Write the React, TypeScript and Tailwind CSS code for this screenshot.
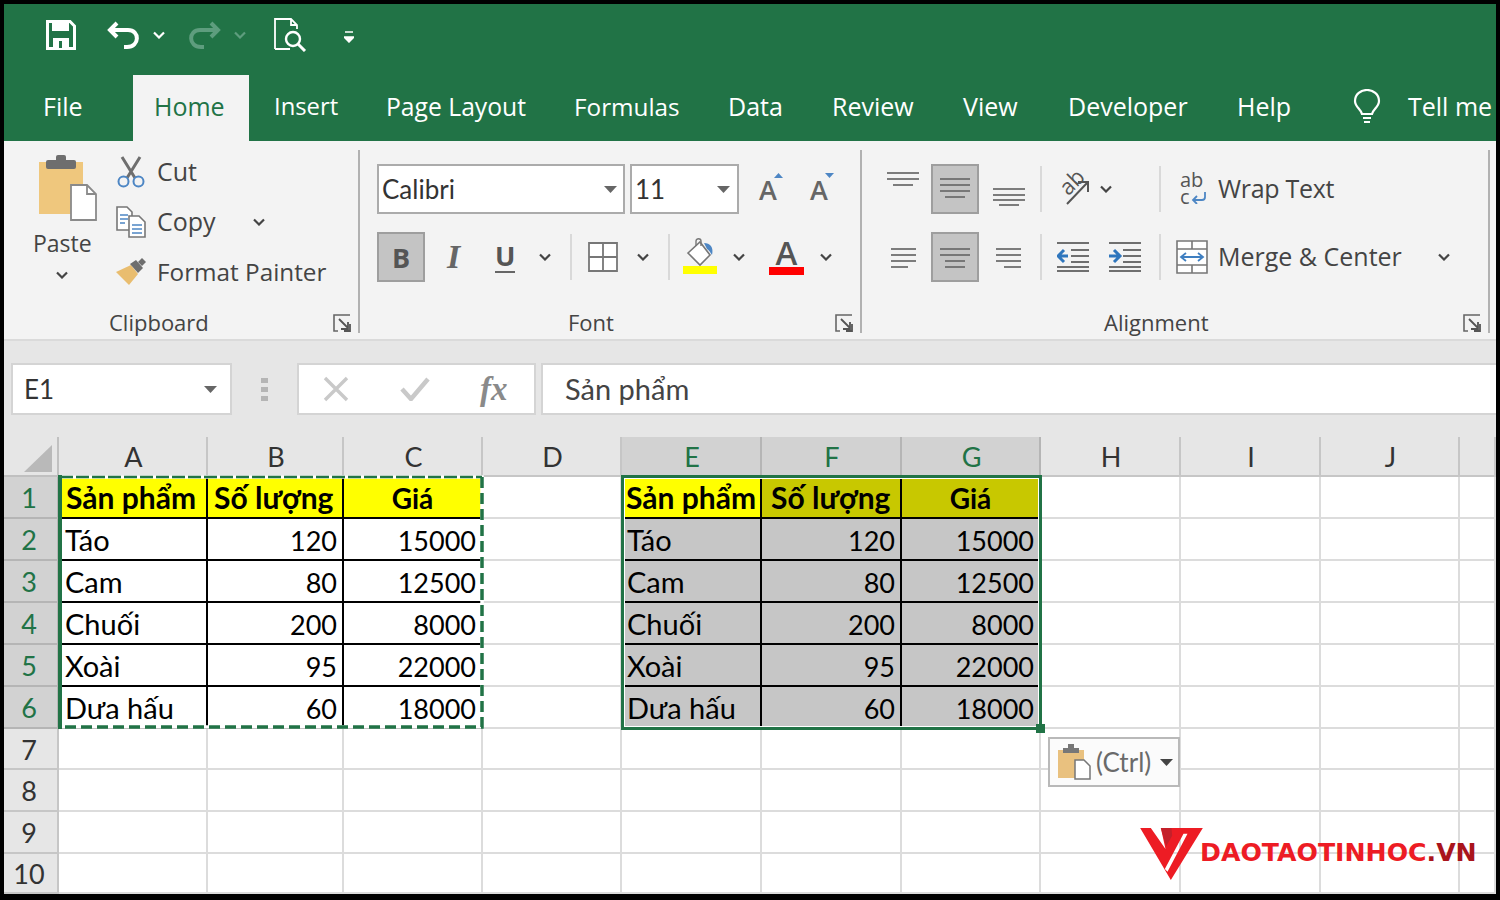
import type { ReactNode } from 'react';

const UI = "font-['Open_Sans','Noto_Sans',sans-serif]";
const CELL = "font-['Lato','Carlito','Noto_Sans',sans-serif]";

function Chevron({ color = '#444', className = '' }: { color?: string; className?: string }) {
  return (
    <svg width="12" height="8" viewBox="0 0 12 8" className={className}>
      <path d="M1 1.500 L6 6.500 L11 1.500" fill="none" stroke={color} strokeWidth="2.200" />
    </svg>
  );
}

function Caret() {
  return (
    <svg width="13" height="7" viewBox="0 0 13 7">
      <path d="M0 0 H13 L6.500 7 Z" fill="#666" />
    </svg>
  );
}

function Launcher() {
  return (
    <svg width="18" height="18" viewBox="0 0 18 18">
      <path d="M1 17 V1 H17 M1 1 V17 H5" fill="none" stroke="#666" strokeWidth="1.600" />
      <path d="M6 5 L15 14 M15 8 V15 H8 M17 10 V17 H11" fill="none" stroke="#555" strokeWidth="1.800" />
    </svg>
  );
}

function Lines({ w, items }: { w: number; items: [number, number, number][] }) {
  return (
    <svg width={w} height="46" viewBox={`0 2 ${w} 46`}>
      {items.map(([a, b, y], i) => (
        <line key={i} x1={a} x2={b} y1={y} y2={y} stroke="#6f6f6f" strokeWidth="1.800" />
      ))}
    </svg>
  );
}

function PressedBox({ w, children }: { w: string; children: ReactNode }) {
  return (
    <div className={`flex h-[50px] items-center justify-center border-2 border-[#9e9e9e] bg-[#c4c4c4] ${w}`}>
      {children}
    </div>
  );
}

function RibbonSep() {
  return <div className="mt-[9px] h-[183px] w-[2px] shrink-0 bg-[#b1b1b1]" />;
}

function SmallSep({ ml }: { ml: string }) {
  return <div className={`h-[46px] w-[2px] shrink-0 bg-[#d9d9d9] ${ml}`} />;
}

function GroupLabel({ pad, children }: { pad: string; children: string }) {
  return (
    <div className="mt-auto mb-[3px] flex h-[28px] items-center pr-[7px]">
      <span className={`text-[22px] leading-none text-[#444] ${pad}`}>{children}</span>
      <span className="mt-[1px] ml-auto">
        <Launcher />
      </span>
    </div>
  );
}

function PasteIcon() {
  return (
    <svg width="60" height="68" viewBox="0 0 60 68">
      <path d="M2 8 H46 V60 H2 Z" fill="#efc77d" />
      <rect x="9" y="6" width="30" height="9" rx="2" fill="#6e6e6e" />
      <rect x="19" y="1" width="10" height="9" rx="2" fill="#6e6e6e" />
      <path d="M34 31 H50 L59 40 V66 H34 Z" fill="#fff" stroke="#8a8a8a" strokeWidth="1.800" />
      <path d="M50 31 V40 H59" fill="none" stroke="#8a8a8a" strokeWidth="1.800" />
    </svg>
  );
}

function CutIcon() {
  return (
    <svg width="30" height="32" viewBox="0 0 30 32">
      <path d="M6 1 L19 22 M24 1 L11 22" stroke="#6e6e6e" strokeWidth="3" fill="none" />
      <circle cx="7.500" cy="25.500" r="5" fill="none" stroke="#4d86c4" strokeWidth="2" />
      <circle cx="22.500" cy="25.500" r="5" fill="none" stroke="#4d86c4" strokeWidth="2" />
    </svg>
  );
}

function CopyIcon() {
  return (
    <svg width="30" height="32" viewBox="0 0 30 32">
      <path d="M1 1 H11 L16 6 V24 H1 Z" fill="#fff" stroke="#777" strokeWidth="1.600" />
      <path d="M4 9 H12 M4 13 H12 M4 17 H9" stroke="#4d86c4" strokeWidth="1.600" />
      <path d="M13 10 H23 L29 16 V31 H13 Z" fill="#fff" stroke="#777" strokeWidth="1.600" />
      <path d="M16 19 H26 M16 23 H26 M16 27 H26" stroke="#4d86c4" strokeWidth="1.600" />
    </svg>
  );
}

function BrushIcon() {
  return (
    <svg width="30" height="28" viewBox="0 0 30 28">
      <path d="M0 14 L15 7 L22 16 L13 27 Z" fill="#e9bd6f" />
      <path d="M14 6 L20 2 L27 10 L22 15 Z" fill="#6e6e6e" />
      <path d="M22 4 L26 0 L30 4 L26 8 Z" fill="#6e6e6e" />
    </svg>
  );
}

function Clipboard() {
  return (
    <div className="flex w-[354px] shrink-0 flex-col pt-[6px]">
      <div className="flex pl-[29px]">
        <div className="flex w-[83px] shrink-0 flex-col">
          <div className="mt-[7px] ml-[4px]">
            <PasteIcon />
          </div>
          <span className="mt-[5px] text-[23px] leading-[32px] text-[#444]">Paste</span>
          <Chevron className="mt-[12px] ml-[23px]" />
        </div>
        <div className="flex flex-col text-[25px] text-[#444]">
          <div className="flex h-[50px] items-center gap-[11px]">
            <CutIcon />
            <span>Cut</span>
          </div>
          <div className="flex h-[50px] items-center gap-[11px]">
            <CopyIcon />
            <span>Copy</span>
            <Chevron className="ml-[26px]" />
          </div>
          <div className="flex h-[50px] items-center gap-[11px]">
            <BrushIcon />
            <span className="text-[24.3px] whitespace-nowrap">Format Painter</span>
          </div>
        </div>
      </div>
      <GroupLabel pad="pl-[105px]">Clipboard</GroupLabel>
    </div>
  );
}

function SizeLetter({ up }: { up?: boolean }) {
  return (
    <div className="relative flex h-[32px] w-[24px] items-end">
      <span className="text-[27px] leading-[30px] font-semibold text-[#666]">A</span>
      <svg width="9" height="5" viewBox="0 0 9 5" className="absolute top-0 right-0">
        <path d={up ? 'M0 5 L4.500 0 L9 5 Z' : 'M0 0 L4.500 5 L9 0 Z'} fill="#4d86c4" />
      </svg>
    </div>
  );
}

function Font() {
  return (
    <div className="flex w-[500px] shrink-0 flex-col pt-[23px] pl-[17px]">
      <div className="flex h-[50px] items-center">
        <div className="flex h-[50px] w-[248px] items-center border-2 border-[#ababab] bg-white pr-[6px] pl-[3px] text-[26px] text-[#333]">
          <span className={CELL}>Calibri</span>
          <span className="ml-auto">
            <Caret />
          </span>
        </div>
        <div className="ml-[5px] flex h-[50px] w-[109px] items-center border-2 border-[#ababab] bg-white pr-[7px] pl-[3px] text-[26px] text-[#333]">
          <span className={CELL}>11</span>
          <span className="ml-auto">
            <Caret />
          </span>
        </div>
        <div className="ml-[20px]">
          <SizeLetter up />
        </div>
        <div className="ml-[27px]">
          <SizeLetter />
        </div>
      </div>
      <div className="mt-[18px] flex h-[50px] items-center">
        <PressedBox w="w-[48px]">
          <span className="text-[27px] leading-none font-bold text-[#555]">B</span>
        </PressedBox>
        <span className="ml-[22px] w-[17px] font-['Liberation_Serif',serif] text-[34px] leading-none font-bold text-[#666] italic">I</span>
        <span className="ml-[31px] w-[20px] border-b-2 border-[#666] text-center text-[27px] leading-[30px] font-bold text-[#555]">U</span>
        <Chevron className="ml-[24px]" />
        <SmallSep ml="ml-[19px]" />
        <svg width="30" height="30" viewBox="0 0 30 30" className="ml-[16px]">
          <path d="M1 1 H29 V29 H1 Z M15 1 V29 M1 15 H29" fill="#fff" stroke="#777" strokeWidth="1.800" />
        </svg>
        <Chevron className="ml-[19px]" />
        <SmallSep ml="ml-[19px]" />
        <svg width="36" height="36" viewBox="0 0 36 36" className="mt-[-3px] ml-[12px]">
          <path d="M6 15 L18 4 L28 17 L18 27 Z" fill="#fff" stroke="#777" strokeWidth="1.600" />
          <path d="M14 8 V3 C14 0 19 0 19 3 V8" fill="none" stroke="#777" strokeWidth="1.400" />
          <path d="M22 5 C28 5 32 9 30 17 C28 14 27 12 25 11 Z" fill="#4d86c4" />
          <rect x="1" y="28" width="34" height="8" fill="#ffff00" />
        </svg>
        <Chevron className="ml-[15px]" />
        <div className="ml-[24px] flex w-[35px] flex-col items-center">
          <span className="text-[33px] leading-[27px] font-semibold text-[#555]">A</span>
          <span className="mt-[1px] h-[8px] w-[35px] bg-[#ff0000]" />
        </div>
        <Chevron className="ml-[16px]" />
      </div>
      <GroupLabel pad="pl-[191px]">Font</GroupLabel>
    </div>
  );
}

function OrientationIcon() {
  return (
    <div className="relative h-[32px] w-[32px]">
      <span className="absolute top-[-4px] left-[1px] -rotate-45 text-[22px] leading-[24px] text-[#555]">ab</span>
      <svg width="32" height="32" viewBox="0 0 32 32" className="absolute top-0 left-0">
        <path d="M10 31 L30 10 M21 9 H31 V19" fill="none" stroke="#555" strokeWidth="2" />
      </svg>
    </div>
  );
}

function WrapIcon() {
  return (
    <div className="relative h-[36px] w-[27px] text-[20px] leading-[17px] text-[#555]">
      <div>
        ab
        <br />c
      </div>
      <svg width="16" height="12" viewBox="0 0 16 12" className="absolute right-0 bottom-[3px]">
        <path d="M14 0 V5 C14 7 13 8 11 8 H3 M6 4 L2 8 L6 12" fill="none" stroke="#4d86c4" strokeWidth="1.800" />
      </svg>
    </div>
  );
}

function MergeIcon() {
  return (
    <svg width="32" height="34" viewBox="0 0 32 34">
      <path d="M1 1 H31 V33 H1 Z M1 9 H31 M1 25 H31 M16 1 V9 M16 25 V33" fill="#fff" stroke="#777" strokeWidth="1.600" />
      <path d="M6 17 H26 M10 13 L5 17 L10 21 M22 13 L27 17 L22 21" fill="none" stroke="#3f7fc1" strokeWidth="1.800" />
    </svg>
  );
}

function IndentIcon({ flip }: { flip?: boolean }) {
  return (
    <svg width="32" height="32" viewBox="0 0 32 32">
      <path d="M0 2 H32 M14 9 H32 M14 15 H32 M14 21 H32 M0 30 H32 M0 26 H32" stroke="#6f6f6f" strokeWidth="1.800" />
      {flip ? (
        <path d="M0 15 H9 M5 9 L11 15 L5 21" fill="none" stroke="#2f76bd" strokeWidth="3" />
      ) : (
        <path d="M11 15 H2 M7 9 L1 15 L7 21" fill="none" stroke="#2f76bd" strokeWidth="3" />
      )}
    </svg>
  );
}

function Alignment() {
  return (
    <div className="flex w-[626px] min-w-0 shrink-0 flex-col pt-[23px] pl-[25px]">
      <div className="flex h-[50px] items-center text-[25px] text-[#444]">
        <Lines w={44} items={[[0, 32, 9], [0, 32, 15], [6, 26, 21]]} />
        <PressedBox w="w-[48px]">
          <Lines w={30} items={[[0, 30, 15], [0, 30, 21], [0, 30, 27], [5, 25, 33]]} />
        </PressedBox>
        <Lines w={46} items={[[14, 46, 25], [14, 46, 31], [14, 46, 36], [20, 40, 41]]} />
        <SmallSep ml="ml-[15px]" />
        <span className="ml-[15px]">
          <OrientationIcon />
        </span>
        <Chevron className="ml-[11px]" />
        <SmallSep ml="ml-[47px]" />
        <span className="ml-[19px]">
          <WrapIcon />
        </span>
        <span className="ml-[11px] tracking-[-0.3px] whitespace-nowrap">Wrap Text</span>
      </div>
      <div className="mt-[18px] flex h-[50px] items-center text-[25px] text-[#444]">
        <Lines w={44} items={[[4, 29, 17], [4, 29, 23], [4, 29, 29], [4, 21, 35]]} />
        <PressedBox w="w-[48px]">
          <Lines w={30} items={[[0, 30, 17], [0, 30, 23], [5, 25, 29], [5, 25, 35]]} />
        </PressedBox>
        <Lines w={46} items={[[17, 42, 17], [17, 42, 23], [17, 42, 29], [25, 42, 35]]} />
        <SmallSep ml="ml-[15px]" />
        <span className="ml-[15px]">
          <IndentIcon />
        </span>
        <span className="ml-[20px]">
          <IndentIcon flip />
        </span>
        <SmallSep ml="ml-[18px]" />
        <span className="ml-[15px]">
          <MergeIcon />
        </span>
        <span className="ml-[10px] whitespace-nowrap">Merge &amp; Center</span>
        <Chevron className="ml-[36px]" />
      </div>
      <GroupLabel pad="pl-[217px]">Alignment</GroupLabel>
    </div>
  );
}

function QuickAccess() {
  return (
    <div className="flex h-[71px] shrink-0 items-center bg-[#217346] pb-[9px] pl-[42px]">
      <svg width="30" height="30" viewBox="0 0 30 30">
        <path d="M1.500 1.500 H24 L28.500 6 V28.500 H1.500 Z" fill="none" stroke="#fff" strokeWidth="3" />
        <rect x="6" y="1" width="17" height="10" fill="#fff" />
        <path d="M7 28 V18 H23 V28" fill="#fff" />
        <rect x="13" y="21" width="3" height="7" fill="#217346" />
      </svg>
      <svg width="32" height="28" viewBox="0 0 32 28" className="ml-[31px]">
        <path d="M3 9 H21 C33 9 33 26 20 26 H17 M10 2 L3 9 L10 16" fill="none" stroke="#fff" strokeWidth="4" />
      </svg>
      <Chevron color="#fff" className="ml-[14px]" />
      <svg width="32" height="28" viewBox="0 0 32 28" className="ml-[24px]">
        <path d="M29 9 H11 C-1 9 -1 26 12 26 H15 M22 2 L29 9 L22 16" fill="none" stroke="#5e9d7e" strokeWidth="4" />
      </svg>
      <Chevron color="#5e9d7e" className="ml-[13px]" />
      <svg width="33" height="34" viewBox="0 0 33 34" className="ml-[28px]">
        <path d="M1 31 V1 H17 L23 7 V11 M17 1 V7 H23 M1 31 H16" fill="none" stroke="#fff" strokeWidth="1.800" />
        <circle cx="19" cy="21" r="7" fill="none" stroke="#fff" strokeWidth="2.400" />
        <path d="M24 26 L31 33" stroke="#fff" strokeWidth="3" />
      </svg>
      <svg width="10" height="12" viewBox="0 0 10 12" className="mt-[4px] ml-[37px]">
        <path d="M1 1 H9 M0 6 H10 L5 11 Z" fill="#fff" stroke="#fff" strokeWidth="1.500" />
      </svg>
    </div>
  );
}

const TABS = [
  { label: 'Insert', w: 'w-[112px] text-[23.8px]' },
  { label: 'Page Layout', w: 'w-[188px] text-[24.7px]' },
  { label: 'Formulas', w: 'w-[154px] text-[24.3px]' },
  { label: 'Data', w: 'w-[104px]' },
  { label: 'Review', w: 'w-[131px]' },
  { label: 'View', w: 'w-[105px]' },
  { label: 'Developer', w: 'w-[169px]' },
  { label: 'Help', w: 'w-[103px]' },
];

function Tabs() {
  return (
    <div className="flex h-[66px] shrink-0 bg-[#217346] pl-[39px] text-[25px] text-white">
      <div className="flex w-[90px] items-center pb-[2px]">File</div>
      <div className="flex w-[116px] items-center bg-[#f3f3f3] pb-[2px] pl-[21px] text-[#217346]">Home</div>
      {TABS.map((t) => (
        <div key={t.label} className={`flex items-center pb-[2px] pl-[25px] whitespace-nowrap ${t.w}`}>
          {t.label}
        </div>
      ))}
      <div className="ml-[38px] flex items-center gap-[27px] pb-[2px] whitespace-nowrap">
        <svg width="28" height="36" viewBox="0 0 28 36">
          <path d="M9 25 C8 20 2 18 2 12 C2 5 8 1 14 1 C20 1 26 5 26 12 C26 18 20 20 19 25 Z M10 29 H18 M11 33 H17" fill="none" stroke="#fff" strokeWidth="2.200" />
        </svg>
        <span>Tell me</span>
      </div>
    </div>
  );
}

function FormulaBar() {
  return (
    <div className="flex h-[96px] shrink-0 items-center bg-[#e6e6e6]">
      <div className="ml-[7px] flex h-[52px] w-[221px] items-center border-2 border-[#d4d4d4] bg-white pr-[13px] pl-[11px] text-[26px] text-[#333]">
        <span className={CELL}>E1</span>
        <span className="ml-auto">
          <Caret />
        </span>
      </div>
      <div className="ml-[29px] flex w-[7px] flex-col gap-[4px]">
        <span className="h-[5px] bg-[#b5b5b5]" />
        <span className="h-[5px] bg-[#b5b5b5]" />
        <span className="h-[5px] bg-[#b5b5b5]" />
      </div>
      <div className="ml-[29px] flex h-[52px] w-[239px] items-center border-2 border-[#d4d4d4] bg-white pl-[24px]">
        <svg width="26" height="26" viewBox="0 0 26 26">
          <path d="M2 2 L24 24 M24 2 L2 24" stroke="#c9c9c9" strokeWidth="3.400" />
        </svg>
        <svg width="30" height="24" viewBox="0 0 30 24" className="ml-[51px]">
          <path d="M2 12 L11 22 L28 2" fill="none" stroke="#c9c9c9" strokeWidth="4.500" />
        </svg>
        <span className="ml-[50px] font-['Liberation_Serif',serif] text-[33px] leading-none font-bold text-[#8a8a8a] italic">fx</span>
      </div>
      <div className="ml-[5px] flex h-[52px] flex-1 items-center border-y-2 border-l-2 border-[#d4d4d4] bg-white pl-[22px]">
        <span className={`${CELL} text-[29px] text-[#444]`}>Sản phẩm</span>
      </div>
    </div>
  );
}

const rows: [string, string, string][] = [
  ['Sản phẩm', 'Số lượng', 'Giá'],
  ['Táo', '120', '15000'],
  ['Cam', '80', '12500'],
  ['Chuối', '200', '8000'],
  ['Xoài', '95', '22000'],
  ['Dưa hấu', '60', '18000'],
];

function TableCells({ r, selected }: { r: number; selected?: boolean }) {
  return (
    <>
      {rows[r].map((v, c) => {
        let bg = 'bg-white';
        if (r === 0) bg = selected && c > 0 ? 'bg-[#c8c800]' : 'bg-[#ffff00]';
        else if (selected) bg = 'bg-[#c6c6c6]';
        let text = 'justify-end pt-[4px] pr-[5px]';
        if (r === 0 && c === 0) text = selected ? 'justify-start pl-[4px] text-[30px] font-bold' : 'justify-start pl-[7px] text-[30px] font-bold';
        else if (r === 0 && c === 1) text = selected ? 'justify-start pl-[9px] text-[30px] font-bold' : 'justify-start pl-[6px] text-[30px] font-bold';
        else if (r === 0) text = 'justify-center pt-[2px] text-[28px] font-bold';
        else if (c === 0) text = selected ? 'justify-start pt-[2px] pl-[5px] text-[29px]' : 'justify-start pt-[2px] pl-[6px] text-[29px]';
        return (
          <div key={c} className={`flex items-center overflow-hidden border-r-2 border-b-2 border-black whitespace-nowrap text-black ${bg} ${text}`}>
            {v}
          </div>
        );
      })}
    </>
  );
}

function BlankCells({ n }: { n: number }) {
  return (
    <>
      {Array.from({ length: n }).map((_, k) => (
        <div key={k} className="border-r-2 border-b-2 border-[#dcdcdc]" />
      ))}
    </>
  );
}

function Sheet() {
  const cols = ['A', 'B', 'C', 'D', 'E', 'F', 'G', 'H', 'I', 'J', ''];
  const nums = [1, 2, 3, 4, 5, 6, 7, 8, 9, 10];
  return (
    <div className={`relative grid flex-1 grid-cols-[55px_149px_136px_139px_139px_140px_140px_139px_140px_140px_139px_1fr] grid-rows-[40px_repeat(6,42px)_41px_42px_42px_40px] bg-white text-[27px] ${CELL}`}>
      <div className="flex items-end justify-end border-r-2 border-b-2 border-[#c0c0c0] bg-[#e6e6e6] pr-[5px] pb-[3px]">
        <svg width="28" height="27" viewBox="0 0 28 27">
          <path d="M28 0 V27 H0 Z" fill="#b9b9b9" />
        </svg>
      </div>
      {cols.map((c, i) => (
        <div
          key={i}
          className={
            i >= 4 && i <= 6
              ? 'flex items-center justify-center border-r-2 border-b-2 border-[#b5b5b5] bg-[#d2d2d2] pt-[3px] pl-[2px] text-[#217346]'
              : 'flex items-center justify-center border-r-2 border-b-2 border-[#c6c6c6] bg-[#e6e6e6] pt-[3px] pl-[2px] text-[#333]'
          }
        >
          {c}
        </div>
      ))}
      {nums.map((n) => {
        const r = n - 1;
        const inTable = r < 6;
        return (
          <div key={n} className="contents">
            <div
              className={
                inTable
                  ? 'flex items-center justify-center border-r-2 border-b-2 border-[#b5b5b5] bg-[#d2d2d2] pt-[3px] pr-[3px] text-[#217346]'
                  : 'flex items-center justify-center border-r-2 border-b-2 border-[#c6c6c6] bg-[#e6e6e6] pt-[3px] pr-[3px] text-[#333]'
              }
            >
              {n}
            </div>
            {inTable ? <TableCells r={r} /> : <BlankCells n={3} />}
            <BlankCells n={1} />
            {inTable ? <TableCells r={r} selected /> : <BlankCells n={3} />}
            <BlankCells n={4} />
          </div>
        );
      })}

      {/* marching ants round the copied range */}
      <svg className="pointer-events-none absolute top-[38px] left-[54px]" width="426" height="254" viewBox="0 0 426 254">
        <path d="M2 2 H424 V252 H2 Z" fill="none" stroke="#fff" strokeWidth="3.500" />
        <path d="M2 2 H424" fill="none" stroke="#217346" strokeWidth="2.500" strokeDasharray="13 3" />
        <path d="M424 2 V252 H2" fill="none" stroke="#217346" strokeWidth="3.500" strokeDasharray="11 5" />
        <path d="M2 0 V254" fill="none" stroke="#217346" strokeWidth="4" />
      </svg>

      {/* selection E1:G6 */}
      <div className="pointer-events-none absolute top-[38px] left-[617px] h-[255px] w-[421px] border-[3px] border-[#217346] outline outline-1 -outline-offset-4 outline-white" />
      <div className="absolute top-[287px] left-[1032px] h-[9px] w-[9px] bg-[#217346]" />

      {/* paste options */}
      <div className="absolute top-[300px] left-[1044px] flex h-[50px] w-[132px] items-center border-2 border-[#b9b9b9] bg-[#fbfbfb] pl-[7px] text-[#6a6a6a]">
        <svg width="34" height="36" viewBox="0 0 34 36">
          <path d="M1 6 H27 V34 H1 Z" fill="#e9c17f" />
          <rect x="6" y="4" width="16" height="5" fill="#777" />
          <rect x="11" y="0" width="6" height="5" fill="#777" />
          <path d="M18 16 H27 L33 22 V35 H18 Z" fill="#fff" stroke="#777" strokeWidth="1.500" />
        </svg>
        <span className="ml-[5px] text-[26px] leading-none">(Ctrl)</span>
        <span className="ml-[9px]">
          <svg width="13" height="7" viewBox="0 0 13 7">
            <path d="M0 0 H13 L6.500 7 Z" fill="#444" />
          </svg>
        </span>
      </div>

      {/* watermark */}
      <div className="pointer-events-none absolute top-[391px] left-[1136px] flex items-start">
        <svg width="63" height="52" viewBox="30 27 188 156">
          <path
            fillRule="evenodd"
            d="M30 27 H218 L122 183 Z M62 27 H92 L106 90 Z M160 44 H172 L112 158 L104 150 Z"
            fill="#ed1c24"
          />
          <path d="M92 27 H124 L126 50 L108 82 Z" fill="#c4202a" />
        </svg>
        <span className="mt-[10px] -ml-[3px] font-['DejaVu_Sans',sans-serif] text-[25.2px] leading-[30px] font-bold text-[#ed1c24]">
          DAOTAOTINHOC<span className="text-[#a9141c]">.VN</span>
        </span>
      </div>
    </div>
  );
}

export default function App() {
  return (
    <div className={`h-[900px] w-[1500px] overflow-hidden bg-black pt-[4px] pr-[4px] pb-[6px] pl-[4px] ${UI}`}>
      <div className="flex h-full flex-col overflow-hidden">
        <QuickAccess />
        <Tabs />
        <div className="flex h-[200px] shrink-0 border-b-2 border-[#dadada] bg-[#f3f3f3]">
          <Clipboard />
          <RibbonSep />
          <Font />
          <RibbonSep />
          <Alignment />
          <RibbonSep />
        </div>
        <FormulaBar />
        <Sheet />
      </div>
    </div>
  );
}
